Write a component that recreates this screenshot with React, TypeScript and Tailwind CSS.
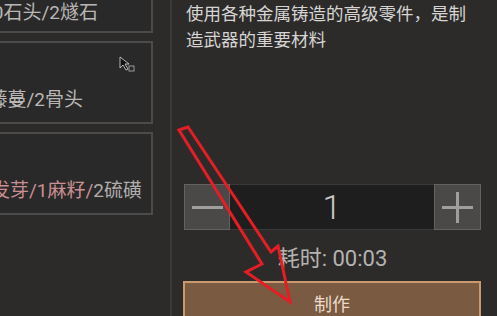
import React from 'react';

const font = { fontFamily: 'Roboto, "Noto Sans CJK SC", sans-serif' };

interface CardProps {
  textBox: string;
  pad?: string;
  children: React.ReactNode;
}

const RecipeCard: React.FC<CardProps> = ({ textBox, pad = 'pb-[9px]', children }) => (
  <div className={`h-[83px] shrink-0 border-2 border-[#4d4b4a] bg-[#2a2929] flex flex-col justify-end overflow-hidden ${pad}`}>
    <div className={`flex justify-end whitespace-nowrap text-[19px] leading-[26px] ${textBox}`}>{children}</div>
  </div>
);

export default function App() {
  return (
    <div className="relative w-[497px] h-[316px] overflow-hidden bg-[#2c2b2a] flex" style={font}>
      {/* Recipe list */}
      <div className="w-[172px] shrink-0 border-r-2 border-[#3b3a39] overflow-hidden">
        <div className="-mt-[50px] -ml-[10px] w-[163px] flex flex-col gap-[8px]">
          <RecipeCard textBox="w-[106px]" pad="pb-[5px]">
            <span className="text-[#b9b7b5] shrink-0">10石头/2燧石</span>
          </RecipeCard>
          <RecipeCard textBox="w-[91px]">
            <span className="text-[#b9b7b5] shrink-0">枯藤蔓/2骨头</span>
          </RecipeCard>
          <RecipeCard textBox="w-[150px]">
            <span className="shrink-0">
              <span className="text-[#c98f93]">1发芽/1麻籽/</span>
              <span className="text-[#b0aeac]">2硫磺</span>
            </span>
          </RecipeCard>
        </div>
      </div>

      {/* Detail panel */}
      <div className="flex-1 flex flex-col pl-[12px] pr-[16px]">
        <div className="h-[184px] shrink-0 pl-[2px] pt-[1px] text-[17.5px] leading-[26px] text-[#d6d5d3]">
          使用各种金属铸造的高级零件，是制造武器的重要材料
        </div>

        <div className="h-[46px] shrink-0 flex">
          <div className="w-[46px] h-full bg-[#4a4948] border border-[#646261] flex items-center justify-center">
            <div className="w-[31px] h-[3px] bg-[#a09e9c]" />
          </div>
          <div className="flex-1 h-full bg-[#1f1e1e] border-y border-[#3a3938] flex items-center justify-center text-[34px] font-light text-[#c9c8c6]">
            1
          </div>
          <div className="w-[47px] h-full bg-[#4a4948] border border-[#646261] flex items-center justify-center relative">
            <div className="w-[31px] h-[3px] bg-[#a09e9c]" />
            <div className="absolute w-[3px] h-[31px] bg-[#a09e9c]" />
          </div>
        </div>

        <div className="h-[51px] shrink-0 pt-[16px] text-center text-[22px] leading-[26px] text-[#b5b3b1]">耗时: 00:03</div>

        <div className="h-[44px] shrink-0 -ml-[1px] border-2 border-[#c99a70] bg-[#7a5a40] flex justify-center pt-[10px] text-[18px] leading-[24px] text-[#eadccd]">
          制作
        </div>
      </div>

      {/* Mouse cursor */}
      <svg className="absolute left-[119px] top-[56px]" width="18" height="18" viewBox="0 0 18 18">
        <path d="M1 1 L1 12 L4 9 L7 14 L9 13 L6 8 L10 8 Z" fill="#111" stroke="#ddd" strokeWidth="0.8" />
        <rect x="10" y="10" width="5" height="5" fill="none" stroke="#999" strokeWidth="1" />
      </svg>

      {/* Red annotation arrow */}
      <svg className="absolute left-0 top-0 pointer-events-none" width="497" height="316" viewBox="0 0 497 316">
        <polygon
          points="179,130 188,127 271,252 278,246 290,302 246,272 262,264"
          fill="none"
          stroke="#e51d25"
          strokeWidth="3"
          strokeLinejoin="miter"
        />
      </svg>
    </div>
  );
}
